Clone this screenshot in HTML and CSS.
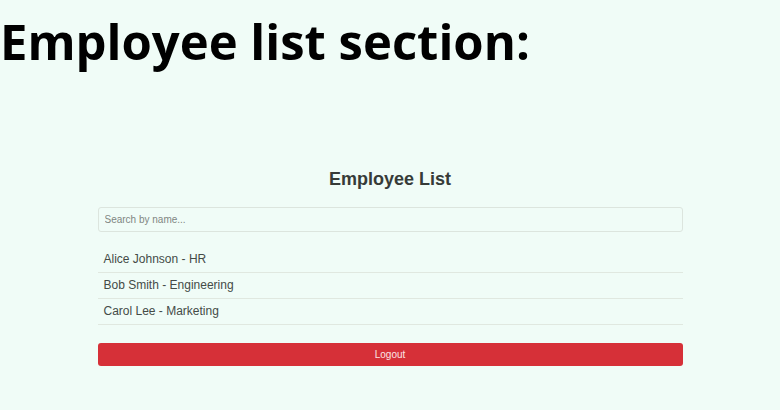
FILE: index.html
```html
<!DOCTYPE html>
<html lang="en">
<head>
<meta charset="utf-8">
<title>Employee List</title>
<link rel="stylesheet" href="styles.css">
</head>
<body>
<h1 class="section-title">Employee list section:</h1>
<main class="panel">
  <h2 class="panel-title">Employee List</h2>
  <input class="search" type="text" placeholder="Search by name..." aria-label="Search by name">
  <ul class="employees">
    <li class="employee">Alice Johnson - HR</li>
    <li class="employee">Bob Smith - Engineering</li>
    <li class="employee">Carol Lee - Marketing</li>
  </ul>
  <button class="logout" type="button">Logout</button>
</main>
</body>
</html>
```
FILE: styles.css
```css
* {
  box-sizing: border-box;
}

body {
  margin: 0;
  background: #f0fcf7;
  color: #444b47;
  font-family: "Liberation Sans", Arial, sans-serif;
}

.section-title {
  margin: 0;
  padding-top: 9px;
  color: #000;
  font: 700 49px/64px "Open Sans", sans-serif;
}

.panel {
  margin: 93px auto 0;
  width: 75%;
}

.panel-title {
  margin: 0 0 15px;
  color: #363b38;
  font-size: 18px;
  line-height: 26px;
  text-align: center;
}

.search {
  display: block;
  width: 100%;
  height: 25px;
  padding: 0 6px;
  border: 1px solid #dce5de;
  border-radius: 3px;
  background: transparent;
  color: #444b47;
  font: 10px "Liberation Sans", Arial, sans-serif;
}

.search::placeholder {
  color: #808682;
}

.employees {
  margin: 15px 0 18px;
  padding: 0;
  list-style: none;
}

.employee {
  height: 26px;
  padding: 0 6px;
  border-bottom: 1px solid #e0e8e0;
  font-size: 12px;
  line-height: 25px;
}

.logout {
  display: block;
  width: 100%;
  height: 23px;
  padding: 0;
  border: 0;
  border-radius: 3px;
  background: #d63038;
  color: #fbe4e5;
  font: 10px "Liberation Sans", Arial, sans-serif;
}
```
